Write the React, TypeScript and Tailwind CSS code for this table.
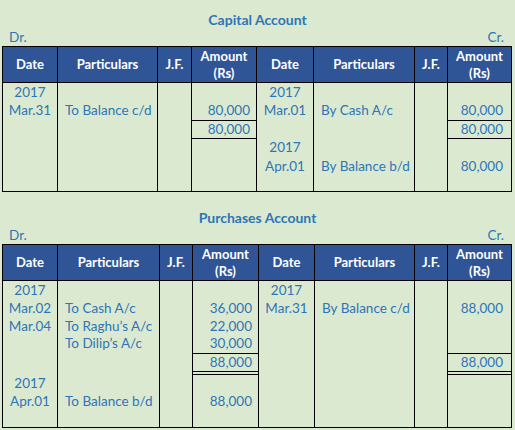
import React from 'react';

type Row = {
  h: string; // tailwind height class
  d1?: string;
  p1?: string;
  a1?: string;
  t1?: string; // amount border style
  d2?: string;
  p2?: string;
  a2?: string;
  t2?: string;
};

const capitalRows: Row[] = [
  { h: 'h-[19px]', d1: '2017', d2: '2017' },
  { h: 'h-[18px]', d1: 'Mar.31', p1: 'To Balance c/d', a1: '80,000', d2: 'Mar.01', p2: 'By Cash A/c', a2: '80,000' },
  { h: 'h-[18px]', a1: '80,000', t1: 'border-t', a2: '80,000', t2: 'border-t' },
  { h: 'h-[20px]', d2: '2017', t1: 'border-t', t2: 'border-t' },
  { h: 'h-[17px]', d2: 'Apr.01', p2: 'By Balance b/d', a2: '80,000' },
  { h: 'h-[16px]' },
];

const purchaseRows: Row[] = [
  { h: 'h-[19px]', d1: '2017', d2: '2017' },
  { h: 'h-[18px]', d1: 'Mar.02', p1: 'To Cash A/c', a1: '36,000', d2: 'Mar.31', p2: 'By Balance c/d', a2: '88,000' },
  { h: 'h-[17px]', d1: 'Mar.04', p1: 'To Raghu\u2019s A/c', a1: '22,000' },
  { h: 'h-[18px]', p1: 'To Dilip\u2019s A/c', a1: '30,000' },
  { h: 'h-[19px]', a1: '88,000', t1: 'border-t border-b', a2: '88,000', t2: 'border-t border-b' },
  { h: 'h-[2px]' },
  { h: 'h-[19px]', d1: '2017', t1: 'border-t', t2: 'border-t' },
  { h: 'h-[17px]', d1: 'Apr.01', p1: 'To Balance b/d', a1: '88,000' },
  { h: 'h-[17px]' },
];

function Ledger({ title, cols, rows }: { title: string; cols: string; rows: Row[] }) {
  const heads = ['Date', 'Particulars', 'J.F.', 'Amount', 'Date', 'Particulars', 'J.F.', 'Amount'];
  return (
    <section>
      <h2 className="h-[30px] pt-[11px] text-center text-[14px] font-bold leading-[18px] text-[#2e75b6]">{title}</h2>
      <div className="flex h-[16px] items-center justify-between px-[9px] text-[13.5px] leading-none text-[#2e75b6]">
        <span>Dr.</span>
        <span className="pr-[2px]">Cr.</span>
      </div>
      <div className="ml-[2px] w-[510px] border-l border-t border-b border-black">
        <div className={`grid ${cols} h-[36px] border-b border-black bg-[#2f5597] text-[13px] font-bold text-white`}>
          {heads.map((hd, i) => (
            <div key={i} className="flex items-center justify-center border-r border-black text-center leading-[17px]">
              {hd === 'Amount' ? (
                <span>
                  Amount
                  <br />
                  (Rs)
                </span>
              ) : (
                hd
              )}
            </div>
          ))}
        </div>
        {rows.map((r, i) => (
          <div key={i} className={`grid ${cols} ${r.h} text-[13.5px] leading-none text-[#2e75b6]`}>
            <div className="flex items-center justify-center border-r border-black">{r.d1}</div>
            <div className="flex items-center border-r border-black pl-[7px]">{r.p1}</div>
            <div className="border-r border-black" />
            <div className={`flex items-center justify-end border-r border-black pr-[6px] ${r.t1 ?? ''}`}>{r.a1}</div>
            <div className="flex items-center justify-center border-r border-black">{r.d2}</div>
            <div className="flex items-center border-r border-black pl-[7px]">{r.p2}</div>
            <div className="border-r border-black" />
            <div className={`flex items-center justify-end border-r border-black pr-[8px] ${r.t2 ?? ''}`}>{r.a2}</div>
          </div>
        ))}
      </div>
    </section>
  );
}

export default function App() {
  return (
    <main className="h-[430px] w-[515px] overflow-hidden bg-[#dbe9d1]" style={{ fontFamily: 'Lato, "Open Sans", sans-serif' }}>
      <Ledger
        title="Capital Account"
        cols="grid-cols-[55px_100px_34px_65px_57px_101px_33px_64px]"
        rows={capitalRows}
      />
      <div className="h-[6px]" />
      <Ledger
        title="Purchases Account"
        cols="grid-cols-[55px_102px_33px_66px_56px_100px_33px_64px]"
        rows={purchaseRows}
      />
    </main>
  );
}
